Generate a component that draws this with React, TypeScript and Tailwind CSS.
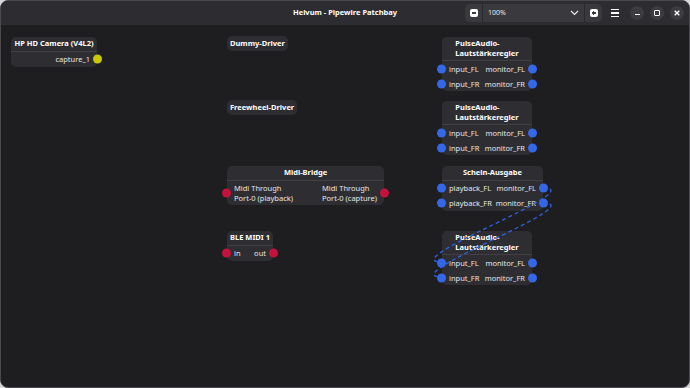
import React from "react";

type Port = { label: React.ReactNode; color: string };

const BLUE = "bg-[#3568e6]";
const RED = "bg-[#c4123d]";
const YELLOW = "bg-[#c9c900]";

const Dot = ({ color, side }: { color: string; side: "l" | "r" }) => (
  <span
    className={`absolute top-1/2 -translate-y-1/2 w-[9px] h-[9px] rounded-full ${color} ${
      side === "l" ? "-left-[5px]" : "-right-[5px]"
    }`}
  />
);

const Node = ({
  x,
  y,
  w,
  title,
  inputs = [],
  outputs = [],
  rowH = 15,
}: {
  x: number;
  y: number;
  w: number;
  title: React.ReactNode;
  inputs?: Port[];
  outputs?: Port[];
  rowH?: number;
}) => {
  const rows = Math.max(inputs.length, outputs.length);
  return (
    <div className="absolute rounded-[5px] bg-[#2e2e32] text-[#e6e6e6]" style={{ left: x, top: y, width: w }}>
      <div className="flex justify-center px-1 pt-[2px] pb-[2px] border-b border-[#404045]">
        <div className="text-left font-bold text-[7.5px] leading-[9.5px] text-white whitespace-nowrap">{title}</div>
      </div>
      <div>
        {Array.from({ length: rows }).map((_, i) => (
          <div key={i} className="relative flex justify-between items-center px-[7px] text-[7.5px] leading-[10px] whitespace-nowrap" style={{ height: rowH }}>
            {inputs[i] ? (
              <>
                <Dot color={inputs[i].color} side="l" />
                <span>{inputs[i].label}</span>
              </>
            ) : (
              <span />
            )}
            {outputs[i] ? (
              <>
                <span className="text-left">{outputs[i].label}</span>
                <Dot color={outputs[i].color} side="r" />
              </>
            ) : (
              <span />
            )}
          </div>
        ))}
      </div>
    </div>
  );
};

const Pill = ({ x, y, text }: { x: number; y: number; text: string }) => (
  <div
    className="absolute rounded-[5px] bg-[#2e2e32] px-[3px] h-[15px] flex items-center font-bold text-[7.5px] text-white whitespace-nowrap"
    style={{ left: x, top: y }}
  >
    {text}
  </div>
);

const paTitle = (
  <>
    PulseAudio-
    <br />
    Lautstärkeregler
  </>
);

const App = () => {
  return (
    <div className="w-[690px] h-[388px] bg-[#d8d8d8] font-['Noto_Sans',sans-serif] overflow-hidden">
      <div className="w-full h-full rounded-[8px] border border-[#4a4a4e] bg-[#1e1e20] overflow-hidden flex flex-col">
        {/* HEADER BAR */}
        <div className="h-[24px] bg-[#2d2d31] flex items-center relative shrink-0">
          <div className="absolute inset-0 flex items-center justify-center text-[7.5px] font-bold text-white">
            Helvum - Pipewire Patchbay
          </div>
          <div className="ml-auto mr-[5px] flex items-center gap-[5px] relative">
            {/* ZOOM CONTROL */}
            <div className="flex items-center h-[18px] w-[137px] rounded-[5px] bg-[#3a3a3e]">
              <div className="w-[17px] h-full flex items-center justify-center">
                <span className="w-[8px] h-[8px] rounded-[2px] bg-white flex items-center justify-center">
                  <span className="w-[4px] h-[1.5px] bg-[#3a3a3e]" />
                </span>
              </div>
              <div className="w-px h-full bg-[#2a2a2e]" />
              <div className="flex-1 flex items-center justify-between pl-[5px] pr-[5px] text-[7px] text-[#e8e8e8]">
                <span>100%</span>
                <svg width="9" height="6" viewBox="0 0 9 6" fill="none" stroke="#e8e8e8" strokeWidth="1.2">
                  <path d="M1 1l3.5 3.5L8 1" />
                </svg>
              </div>
              <div className="w-px h-full bg-[#2a2a2e]" />
              <div className="w-[17px] h-full flex items-center justify-center">
                <span className="w-[8px] h-[8px] rounded-[2px] bg-white relative flex items-center justify-center">
                  <span className="absolute w-[4px] h-[1.5px] bg-[#3a3a3e]" />
                  <span className="absolute w-[1.5px] h-[4px] bg-[#3a3a3e]" />
                </span>
              </div>
            </div>
            {/* MENU */}
            <div className="w-[16px] h-[16px] flex flex-col items-center justify-center gap-[2px]">
              <span className="w-[8px] h-[1.5px] bg-white" />
              <span className="w-[8px] h-[1.5px] bg-white" />
              <span className="w-[8px] h-[1.5px] bg-white" />
            </div>
            {/* WINDOW CONTROLS */}
            <div className="flex items-center gap-[6px] ml-[2px]">
              <div className="w-[14px] h-[14px] rounded-full bg-[#3c3c40] flex items-center justify-center">
                <span className="w-[5px] h-[1.5px] bg-white mt-[3px]" />
              </div>
              <div className="w-[14px] h-[14px] rounded-full bg-[#3c3c40] flex items-center justify-center">
                <span className="w-[6px] h-[6px] border-[1.5px] border-white rounded-[1px]" />
              </div>
              <div className="w-[14px] h-[14px] rounded-full bg-[#3c3c40] flex items-center justify-center">
                <svg width="6" height="6" viewBox="0 0 6 6" stroke="white" strokeWidth="1.4">
                  <path d="M0.7 0.7L5.3 5.3M5.3 0.7L0.7 5.3" />
                </svg>
              </div>
            </div>
          </div>
        </div>

        {/* CANVAS */}
        <div className="relative flex-1">
          <Node x={10} y={12} w={86} title="HP HD Camera (V4L2)" outputs={[{ label: "capture_1", color: YELLOW }]} />

          <Pill x={226} y={11} text="Dummy-Driver" />
          <Pill x={226} y={75} text="Freewheel-Driver" />

          <Node
            x={226}
            y={141}
            w={157}
            title="Midi-Bridge"
            rowH={24}
            inputs={[{ label: <>Midi Through<br />Port-0 (playback)</>, color: RED }]}
            outputs={[{ label: <>Midi Through<br />Port-0 (capture)</>, color: RED }]}
          />

          <Node
            x={226}
            y={206}
            w={46}
            title="BLE MIDI 1"
            inputs={[{ label: "in", color: RED }]}
            outputs={[{ label: "out", color: RED }]}
          />

          {[12, 76, 206].map((y) => (
            <Node
              key={y}
              x={441}
              y={y}
              w={90}
              title={paTitle}
              inputs={[
                { label: "input_FL", color: BLUE },
                { label: "input_FR", color: BLUE },
              ]}
              outputs={[
                { label: "monitor_FL", color: BLUE },
                { label: "monitor_FR", color: BLUE },
              ]}
            />
          ))}

          <Node
            x={441}
            y={141}
            w={101}
            title="Schein-Ausgabe"
            inputs={[
              { label: "playback_FL", color: BLUE },
              { label: "playback_FR", color: BLUE },
            ]}
            outputs={[
              { label: "monitor_FL", color: BLUE },
              { label: "monitor_FR", color: BLUE },
            ]}
          />

          {/* LINKS */}
          <svg className="absolute inset-0 pointer-events-none" width="688" height="362">
            <g fill="none" stroke="#2f62e0" strokeWidth="1.3" strokeDasharray="4 3">
              <path d="M542 163 C592 163, 391 237, 441 237" />
              <path d="M542 178 C592 178, 391 252, 441 252" />
            </g>
          </svg>
        </div>
      </div>
    </div>
  );
};

export default App;
